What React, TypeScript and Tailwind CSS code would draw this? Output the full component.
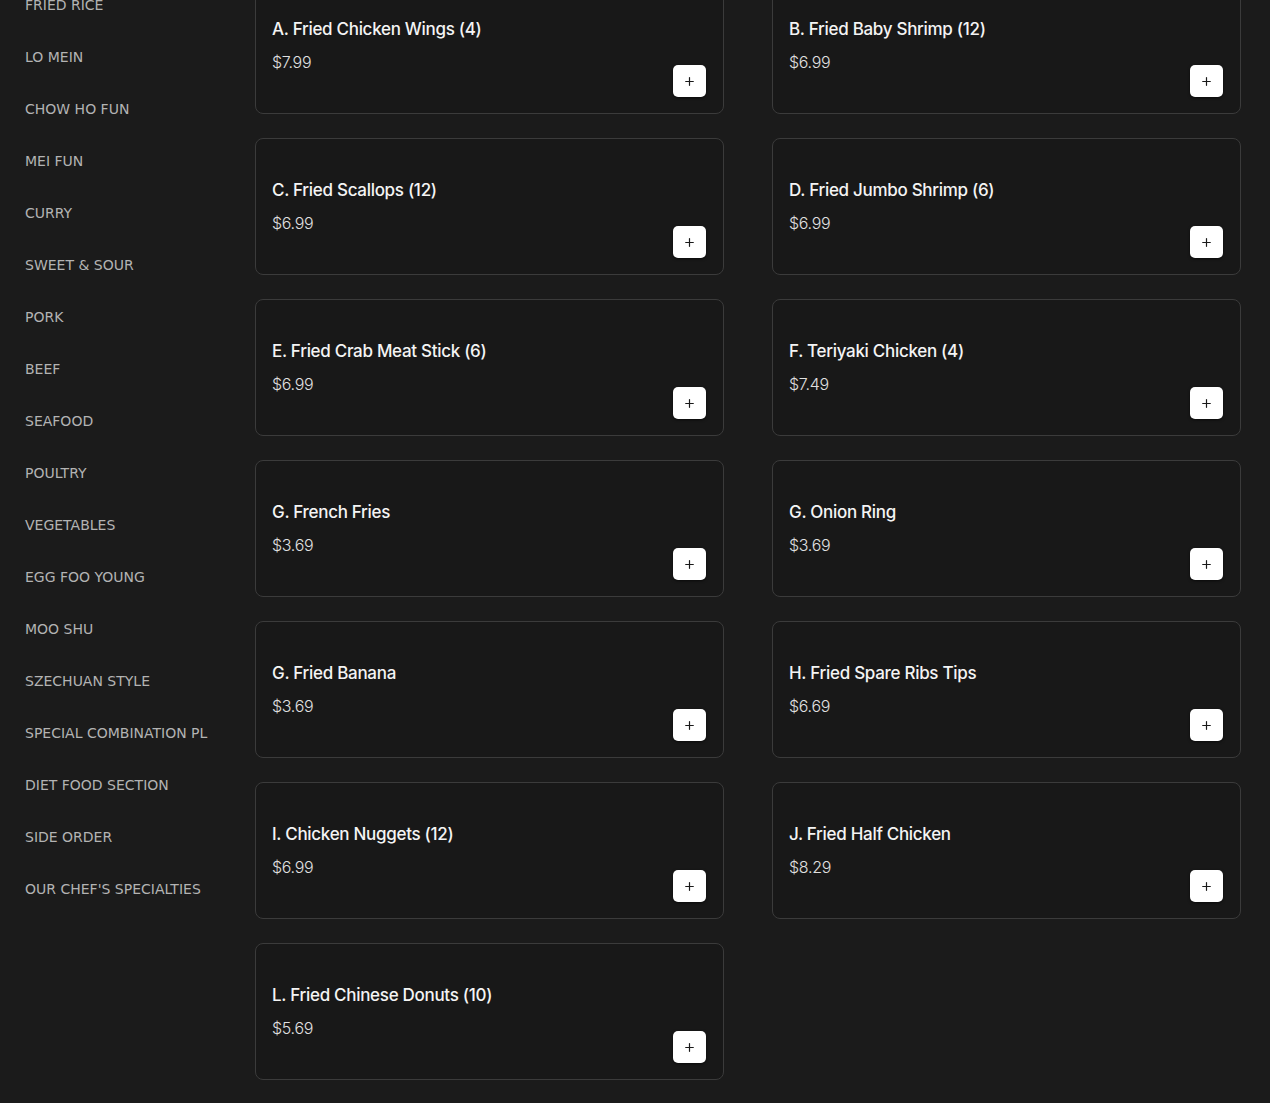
import { Plus } from 'lucide-react';

const CATEGORIES = [
  'FRIED RICE',
  'LO MEIN',
  'CHOW HO FUN',
  'MEI FUN',
  'CURRY',
  'SWEET & SOUR',
  'PORK',
  'BEEF',
  'SEAFOOD',
  'POULTRY',
  'VEGETABLES',
  'EGG FOO YOUNG',
  'MOO SHU',
  'SZECHUAN STYLE',
  'SPECIAL COMBINATION PL',
  'DIET FOOD SECTION',
  'SIDE ORDER',
  "OUR CHEF'S SPECIALTIES",
];

const ITEMS = [
  { name: 'A. Fried Chicken Wings (4)', price: '$7.99' },
  { name: 'B. Fried Baby Shrimp (12)', price: '$6.99' },
  { name: 'C. Fried Scallops (12)', price: '$6.99' },
  { name: 'D. Fried Jumbo Shrimp (6)', price: '$6.99' },
  { name: 'E. Fried Crab Meat Stick (6)', price: '$6.99' },
  { name: 'F. Teriyaki Chicken (4)', price: '$7.49' },
  { name: 'G. French Fries', price: '$3.69' },
  { name: 'G. Onion Ring', price: '$3.69' },
  { name: 'G. Fried Banana', price: '$3.69' },
  { name: 'H. Fried Spare Ribs Tips', price: '$6.69' },
  { name: 'I. Chicken Nuggets (12)', price: '$6.99' },
  { name: 'J. Fried Half Chicken', price: '$8.29' },
  { name: 'L. Fried Chinese Donuts (10)', price: '$5.69' },
];

function MenuCard({ name, price }: { name: string; price: string }) {
  return (
    <div className="h-[137px] rounded-lg border border-[#3b3b3b] bg-[#181818] flex justify-between pl-4 pr-[17px] pb-4 pt-[38px]">
      <div className="flex flex-col">
        <div className="text-[17px] leading-[26px] font-medium text-[#f4f4f4] tracking-[-0.3px]">{name}</div>
        <div className="mt-[8px] text-[16px] leading-6 font-light text-[#e0e0e0] tracking-[-0.3px]">{price}</div>
      </div>
      <div className="flex items-end">
        <button className="w-[33px] h-[32px] rounded-[5px] bg-white flex items-center justify-center shadow-[0_1px_3px_rgba(0,0,0,0.6)]">
          <Plus size={13} strokeWidth={2.2} color="#1a1a1a" />
        </button>
      </div>
    </div>
  );
}

export default function App() {
  return (
    <div className="min-h-[1103px] bg-[#1b1b1b] overflow-hidden">
      <div className="flex -mt-[23px]">
        <nav className="w-[255px] shrink-0 pt-[2px] font-['DejaVu_Sans',sans-serif]">
          {CATEGORIES.map(c => (
            <div key={c} className="px-[25px] py-4 text-[14px] leading-5 text-[#b3b3b3] whitespace-nowrap overflow-hidden">
              {c}
            </div>
          ))}
        </nav>
        <main className="flex-1 pr-[29px] font-['Inter',sans-serif]">
          <div className="grid grid-cols-2 gap-x-12 gap-y-6 pb-6">
            {ITEMS.map(item => (
              <MenuCard key={item.name} name={item.name} price={item.price} />
            ))}
          </div>
        </main>
      </div>
    </div>
  );
}
